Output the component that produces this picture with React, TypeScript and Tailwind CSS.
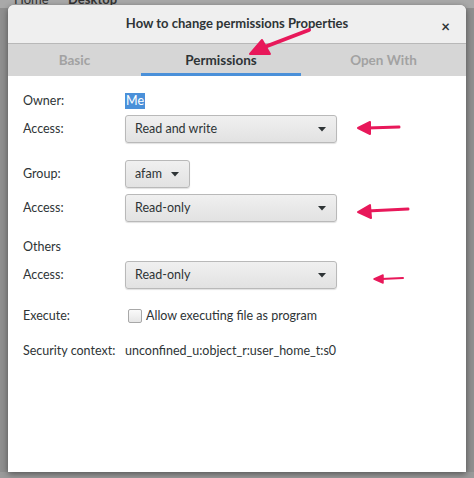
import React from "react";

const font = { fontFamily: 'Lato, "Noto Sans", sans-serif' };

function Caret() {
  return (
    <svg width="8" height="5" viewBox="0 0 8 5" className="shrink-0">
      <path d="M0 0 L8 0 L4 4.5 Z" fill="#2e3436" />
    </svg>
  );
}

function Combo({ label, wide = true }: { label: string; wide?: boolean }) {
  return (
    <div
      className={`flex items-center justify-between h-[28px] rounded-[3px] border border-[#b9b9b9] bg-gradient-to-b from-[#f0f0f0] to-[#e2e2e2] shadow-[0_1px_1px_rgba(0,0,0,0.12)] pl-[9px] ${
        wide ? "w-[212px] pr-[10px]" : "w-[65px] pr-[10px]"
      }`}
    >
      <span className="text-[12.5px] text-[#2e3436] leading-none">{label}</span>
      <Caret />
    </div>
  );
}

function Row({
  label,
  children,
  className = "",
}: {
  label: string;
  children?: React.ReactNode;
  className?: string;
}) {
  return (
    <div className={`flex items-center ${className}`}>
      <div className="w-[102px] shrink-0 whitespace-nowrap text-[12.5px] text-[#2e3436] leading-none">
        {label}
      </div>
      {children}
    </div>
  );
}

export default function App() {
  return (
    <div
      className="relative w-[474px] h-[478px] overflow-hidden bg-[#8f8f8f]"
      style={font}
    >
      {/* background window hints */}
      <div className="absolute left-0 top-0 w-[474px] h-[8px] bg-[#a9a9a9]">
        <span className="absolute left-[14px] top-[-7px] text-[13px] leading-[13px] text-[#333]">Home</span>
        <span className="absolute left-[68px] top-[-7px] text-[13px] leading-[13px] font-bold text-[#333]">Desktop</span>
      </div>
      <div className="absolute left-0 top-[472px] w-[474px] h-[6px] bg-[#9a9a9a]" />

      <div className="relative pt-[5px] pl-[8px]">
        <div className="w-[458px] h-[467px] bg-white flex flex-col shadow-[0_2px_6px_rgba(0,0,0,0.45)] rounded-t-[6px] overflow-hidden">
          {/* title bar */}
          <div className="relative h-[39px] shrink-0 bg-[#efefef] border-b border-[#b8b8b8] flex items-center justify-center">
            <span className="text-[13px] font-bold text-[#2e3436]">
              How to change permissions Properties
            </span>
            <span className="absolute right-[16px] top-[10px] text-[15px] font-bold text-[#2e3436]">
              ×
            </span>
          </div>
          {/* tabs */}
          <div className="h-[32px] shrink-0 bg-[#d6d6d6] flex">
            <div className="w-[133px] flex items-center justify-center text-[13.5px] font-bold text-[#a2a2a2]">
              Basic
            </div>
            <div className="w-[160px] flex items-center justify-center text-[13.5px] font-bold text-[#2e3436] border-b-[3px] border-[#4a90d9] pt-[3px]">
              Permissions
            </div>
            <div className="w-[165px] flex items-center justify-center text-[13.5px] font-bold text-[#a2a2a2]">
              Open With
            </div>
          </div>
          {/* content */}
          <div className="flex flex-col pl-[15px] pt-[17px]">
            <Row label="Owner:" className="h-[16px]">
              <span className="bg-[#4a90d9] text-white text-[12.5px] leading-[16px] px-[1px]">Me</span>
            </Row>
            <Row label="Access:" className="mt-[6px]">
              <Combo label="Read and write" />
            </Row>
            <Row label="Group:" className="mt-[17px]">
              <Combo label="afam" wide={false} />
            </Row>
            <Row label="Access:" className="mt-[6px]">
              <Combo label="Read-only" />
            </Row>
            <Row label="Others" className="mt-[17px] h-[16px]" />
            <Row label="Access:" className="mt-[6px]">
              <Combo label="Read-only" />
            </Row>
            <Row label="Execute:" className="mt-[19px] h-[16px]">
              <div className="flex items-center gap-[4px] ml-[3px]">
                <div className="w-[14px] h-[14px] rounded-[2px] border border-[#a8a8a8] bg-gradient-to-b from-[#fafafa] to-[#e6e6e6]" />
                <span className="text-[12.5px] text-[#2e3436] leading-none">
                  Allow executing file as program
                </span>
              </div>
            </Row>
            <Row label="Security context:" className="mt-[19px] h-[16px]">
              <span className="text-[12.5px] text-[#2e3436] leading-none">
                unconfined_u:object_r:user_home_t:s0
              </span>
            </Row>
          </div>
        </div>
      </div>

      {/* annotation arrows */}
      <svg className="absolute left-0 top-0 pointer-events-none" width="474" height="478">
        <g fill="#e8185a" stroke="#e8185a" strokeLinecap="round" strokeLinejoin="round">
          <path d="M309 30 L262 48" strokeWidth="4" fill="none" />
          <path d="M250 54 L262 40 L270 54 Z" strokeWidth="2" />
          <path d="M367 128 L399 127" strokeWidth="3" fill="none" />
          <path d="M358 128 L370 122 L370 134 Z" strokeWidth="2" />
          <path d="M367 211 L408 209" strokeWidth="3" fill="none" />
          <path d="M358 212 L370 205 L371 218 Z" strokeWidth="2" />
          <path d="M381 279 L403 278" strokeWidth="2" fill="none" />
          <path d="M374 279 L383 275 L383 283 Z" strokeWidth="1.5" />
        </g>
      </svg>
    </div>
  );
}
